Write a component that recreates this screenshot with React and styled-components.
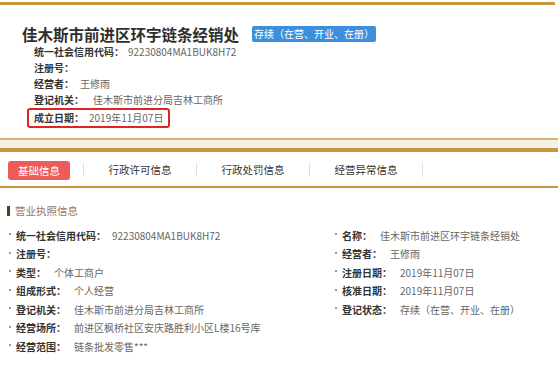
import React from 'react';
import styled, { createGlobalStyle } from 'styled-components';

const GlobalStyle = createGlobalStyle`
  html, body {
    margin: 0;
    padding: 0;
    background: #fff;
    overflow: hidden;
  }
  body {
    font-family: "Noto Sans CJK SC", "Noto Sans", sans-serif;
    color: #333;
  }
`;

const gold = '#c8963c';

const headerLines = [
  { label: '统一社会信用代码：', value: '92230804MA1BUK8H72', gap: 4 },
  { label: '注册号：', value: '' },
  { label: '经营者：', value: '王修雨', gap: 6 },
  { label: '登记机关：', value: '佳木斯市前进分局吉林工商所', gap: 9 },
];

const tabs = ['行政许可信息', '行政处罚信息', '经营异常信息'];

const leftRows = [
  ['统一社会信用代码：', '92230804MA1BUK8H72'],
  ['注册号：', ''],
  ['类型：', '个体工商户'],
  ['组成形式：', '个人经营'],
  ['登记机关：', '佳木斯市前进分局吉林工商所'],
  ['经营场所：', '前进区枫桥社区安庆路胜利小区L楼16号库'],
  ['经营范围：', '链条批发零售***'],
];

const rightRows = [
  ['名称：', '佳木斯市前进区环宇链条经销处'],
  ['经营者：', '王修雨'],
  ['注册日期：', '2019年11月07日'],
  ['核准日期：', '2019年11月07日'],
  ['登记状态：', '存续（在营、开业、在册）'],
];

const App = () => (
  <Page>
    <GlobalStyle />
    <TopRule />
    <Header>
      <TitleRow>
        <Title>佳木斯市前进区环宇链条经销处</Title>
        <StatusBadge>存续（在营、开业、在册）</StatusBadge>
      </TitleRow>
      <InfoList>
        {headerLines.map((l) => (
          <InfoLine key={l.label}>
            <Label>{l.label}</Label>
            {l.value && <Value $gap={l.gap}>{l.value}</Value>}
          </InfoLine>
        ))}
        <Highlight>
          <Label>成立日期：</Label>
          <Value $gap={5}>2019年11月07日</Value>
        </Highlight>
      </InfoList>
    </Header>

    <TabBar>
      <TabBand />
      <TabRow>
        <ActiveTab>基础信息</ActiveTab>
        <Divider />
        {tabs.map((t) => (
          <React.Fragment key={t}>
            <Tab>{t}</Tab>
            <Divider />
          </React.Fragment>
        ))}
      </TabRow>
    </TabBar>

    <SectionTitle>营业执照信息</SectionTitle>
    <Columns>
      <Column $pad={9}>
        {leftRows.map(([k, v]) => (
          <Row key={k}>
            <Dot />
            <Label>{k}</Label>
            {v && <Value $gap={k.length > 8 ? 6 : 8}>{v}</Value>}
          </Row>
        ))}
      </Column>
      <Column>
        {rightRows.map(([k, v]) => (
          <Row key={k}>
            <Dot />
            <Label>{k}</Label>
            <Value $gap={8}>{v}</Value>
          </Row>
        ))}
      </Column>
    </Columns>
  </Page>
);

const Page = styled.div`
  width: 558px;
  height: 365px;
  padding-top: 2px;
  box-sizing: border-box;
`;

const TopRule = styled.div`
  width: 555px;
  height: 3px;
  background: ${gold};
`;

const Header = styled.header`
  padding: 19px 0 0 22px;
`;

const TitleRow = styled.div`
  display: flex;
  align-items: center;
  gap: 13px;
`;

const Title = styled.h1`
  margin: 0;
  font-size: 15.5px;
  line-height: 20px;
  font-weight: 700;
  color: #2e2e2e;
`;

const StatusBadge = styled.span`
  display: inline-block;
  height: 16px;
  line-height: 16px;
  padding: 0 2px;
  font-size: 10px;
  color: #fff;
  background: #3d8fde;
  border-radius: 2px;
  white-space: nowrap;
`;

const InfoList = styled.div`
  display: flex;
  flex-direction: column;
  align-items: flex-start;
  padding-left: 12px;
`;

const InfoLine = styled.div`
  display: flex;
  font-size: 10px;
  line-height: 16px;
  white-space: nowrap;
`;

const Highlight = styled(InfoLine)`
  margin-left: -7px;
  padding: 0 5px;
  border: 2px solid #e02424;
  border-radius: 3px;
`;

const Label = styled.span`
  font-weight: 700;
  color: #333;
`;

const Value = styled.span`
  margin-left: ${(p) => p.$gap || 6}px;
  color: #666;
`;

const TabBar = styled.nav`
  margin-top: 10px;
  border-top: 2px solid #dbb46b;
  border-bottom: 2px solid ${gold};
`;

const TabBand = styled.div`
  height: 8px;
  background: #f6f1e7;
  border-bottom: 4px solid ${gold};
`;

const TabRow = styled.div`
  display: flex;
  align-items: center;
  height: 34px;
  padding-left: 8px;
  font-size: 10.5px;
`;

const ActiveTab = styled.div`
  width: 62px;
  height: 19px;
  margin-top: 3px;
  margin-right: 13px;
  line-height: 19px;
  text-align: center;
  color: #fff;
  background: #ee5b5b;
  border-radius: 3px;
`;

const Tab = styled.div`
  width: 112px;
  text-align: center;
  color: #333;
`;

const Divider = styled.span`
  width: 1px;
  height: 14px;
  margin-top: 2px;
  background: #dedede;
`;

const SectionTitle = styled.h2`
  display: flex;
  align-items: center;
  gap: 5px;
  margin: 14px 0 0 7px;
  font-size: 10.5px;
  line-height: 18px;
  font-weight: 400;
  color: #98775a;

  &::before {
    content: '';
    width: 3px;
    height: 10px;
    background: #5a3b1f;
  }
`;

const Columns = styled.div`
  display: grid;
  grid-template-columns: 335px 1fr;
  margin-top: 6px;
`;

const Column = styled.div`
  display: flex;
  flex-direction: column;
  padding-left: ${(p) => p.$pad || 0}px;
`;

const Row = styled.div`
  display: flex;
  align-items: center;
  height: 18.5px;
  font-size: 10px;
  white-space: nowrap;
`;

const Dot = styled.span`
  width: 2px;
  height: 2px;
  margin: -2px 5px 0 0;
  background: #999;
`;

export default App;
